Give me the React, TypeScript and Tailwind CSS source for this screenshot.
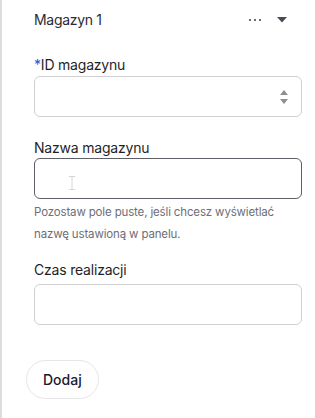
import React from "react";

export default function App() {
  return (
    <div className="w-[315px] h-[418px] bg-white flex" style={{ fontFamily: "Inter, 'Noto Sans', sans-serif" }}>
      <div className="w-[2px] bg-[#dcdce0] shrink-0" />
      <div className="flex-1 flex flex-col">
        <div className="pl-[32px] pr-[13px]">
          <div className="h-[38px] flex items-center justify-between pt-[1px]">
            <span className="text-[14px] text-[#2b2b33] tracking-[-0.3px]">Magazyn 1</span>
            <div className="flex items-center gap-[16px] pr-[15px]">
              <div className="flex gap-[3px]">
                <span className="w-[2px] h-[2px] bg-[#6b6b75]" />
                <span className="w-[2px] h-[2px] bg-[#6b6b75]" />
                <span className="w-[2px] h-[2px] bg-[#6b6b75]" />
              </div>
              <svg width="10" height="6" viewBox="0 0 10 6"><path d="M0 0H10L5 5.5Z" fill="#4a4a55" /></svg>
            </div>
          </div>
          <div className="mt-[17px] text-[14px] text-[#1f1f28] leading-[20px] tracking-[-0.2px]">
            <span className="text-[#2b4bd6]">*</span>ID magazynu
          </div>
          <div className="mt-[1px] h-[41px] border border-[#cfcfd4] rounded-[6px] flex items-center justify-end pr-[13px]">
            <svg width="8" height="16" viewBox="0 0 8 16">
              <path d="M0 6L4 1L8 6Z" fill="#8e8e95" />
              <path d="M0 10L4 15L8 10Z" fill="#8e8e95" />
            </svg>
          </div>
          <div className="mt-[21px] text-[14px] text-[#1f1f28] leading-[20px] tracking-[-0.2px]">Nazwa magazynu</div>
          <div className="h-[41px] border border-[#5e5e66] rounded-[6px] flex items-center pl-[34px] pt-[9px]">
            <svg width="6" height="14" viewBox="0 0 6 14">
              <path d="M0 0.5H6M3 0.5V13.5M0 13.5H6" stroke="#d6d6da" strokeWidth="1" fill="none" />
            </svg>
          </div>
          <div className="mt-[2px] text-[11.5px] leading-[22px] text-[#6e6e76] tracking-[-0.15px]">
            Pozostaw pole puste, jeśli chcesz wyświetlać<br />nazwę ustawioną w panelu.
          </div>
          <div className="mt-[15px] text-[14px] text-[#1f1f28] leading-[20px] tracking-[-0.2px]">Czas realizacji</div>
          <div className="mt-[4px] h-[41px] border border-[#cfcfd4] rounded-[6px]" />
        </div>
        <div className="pl-[24px] mt-[35px]">
          <button className="h-[39px] px-[16px] rounded-full border border-[#e6e6ea] text-[14px] text-[#1a1a2e] font-medium bg-white">
            Dodaj
          </button>
        </div>
      </div>
    </div>
  );
}
